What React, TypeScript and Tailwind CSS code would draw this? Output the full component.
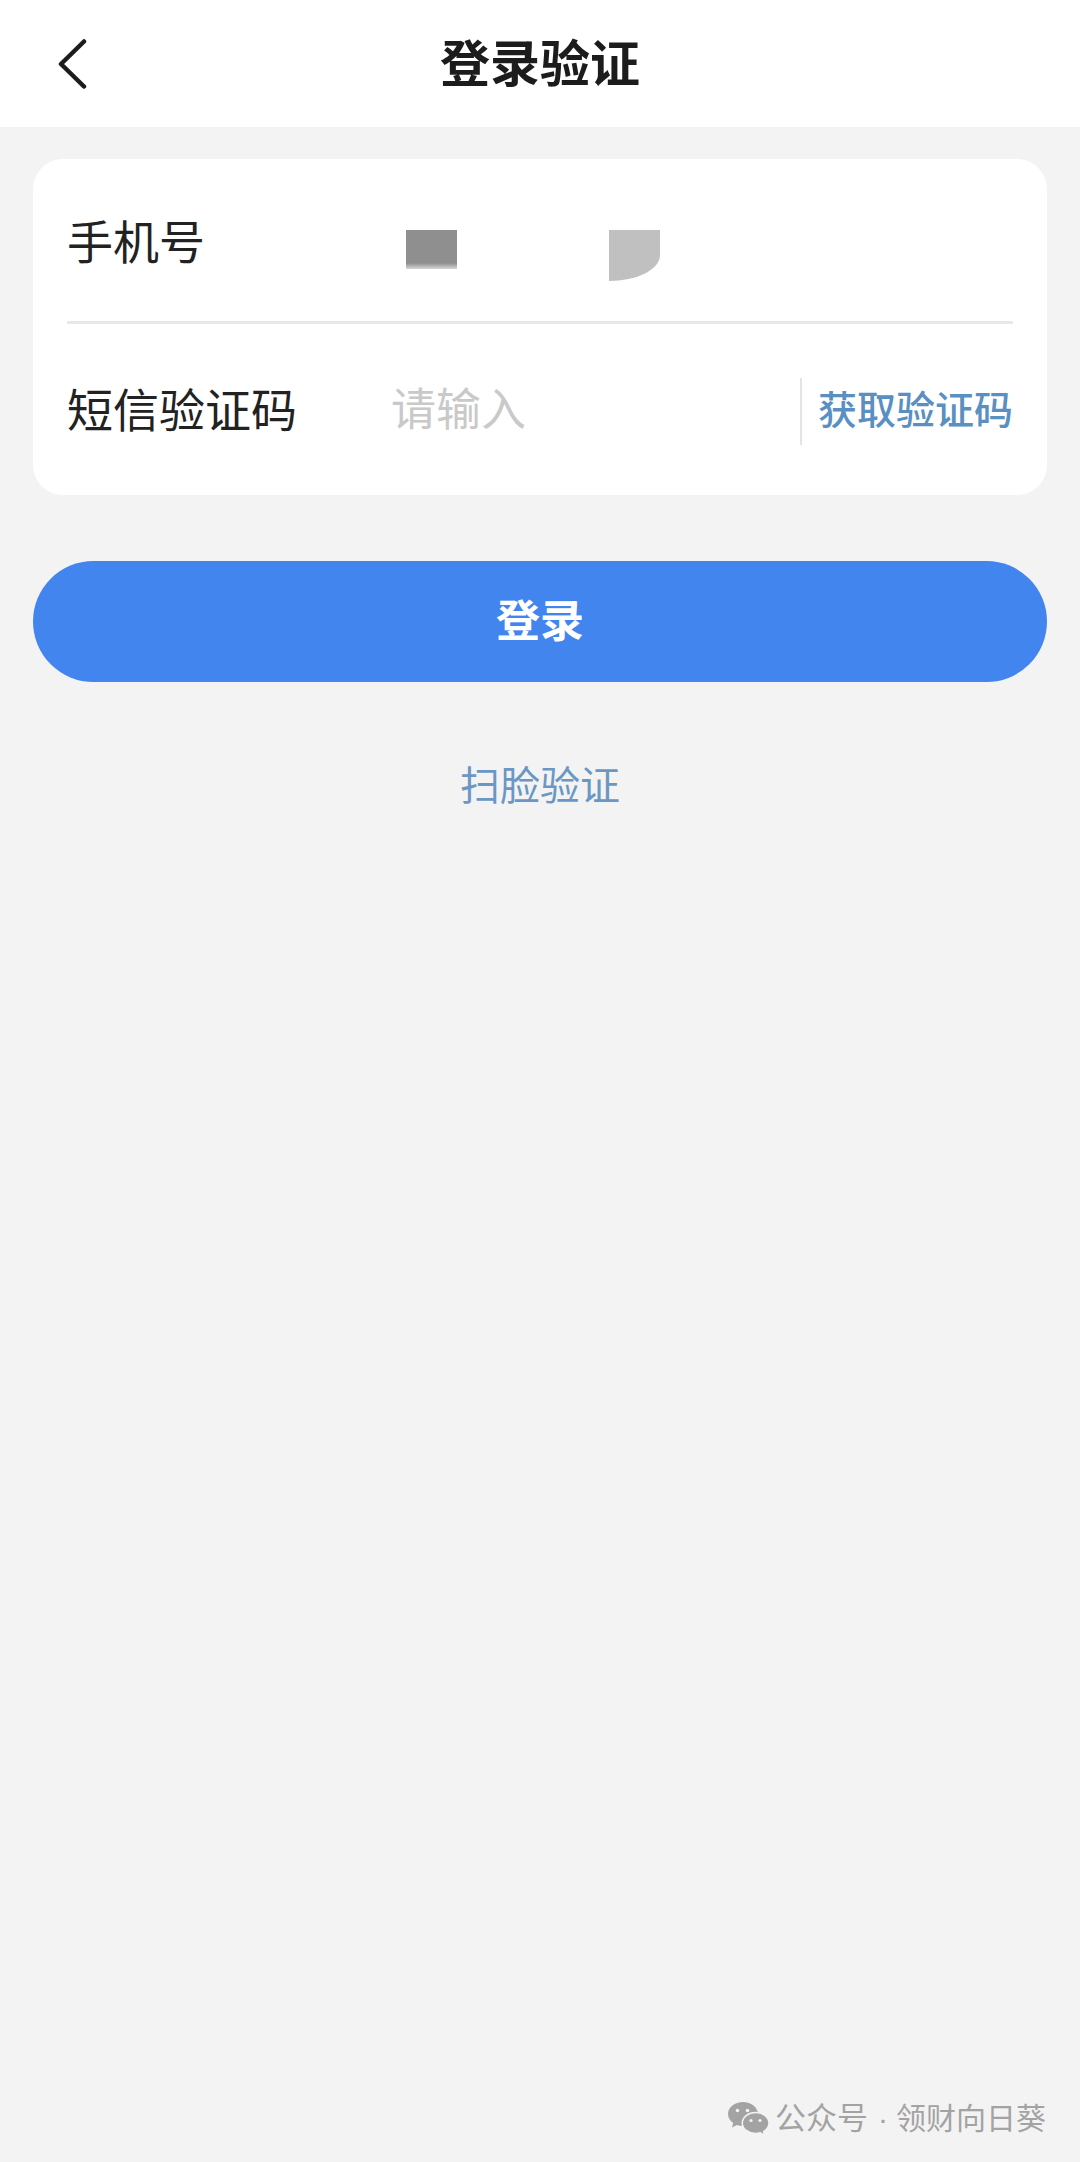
function BackIcon() {
    return (
        <svg width="32" height="50" viewBox="0 0 32 50" fill="none" className="text-[#1c1c1c]">
            <path d="M28 2.500 5 25l23 22.500" stroke="currentColor" strokeWidth="4.500" strokeLinecap="round" strokeLinejoin="round" />
        </svg>
    )
}

function WechatIcon() {
    return (
        <svg width="41" height="34" viewBox="0 0 41 34" className="shrink-0">
            <path d="M15 0C6.900 0 0 5.300 0 12c0 3.700 2.100 6.900 5.200 9.100L4 25.500l5-2.600c1.900.6 3.900.9 6 .9 8.100 0 15-5.300 15-11.800S23.100 0 15 0z" fill="#a3a3a3" />
            <path d="M27.500 10.500C20.300 10.500 14.300 15.100 14.300 21s6 10.500 13.200 10.500c1.700 0 3.300-.3 4.800-.7l4.300 2.700-1-3.900c3.300-2 5.400-5.100 5.400-8.600 0-5.900-6.100-10.500-13.500-10.500z" fill="#a3a3a3" stroke="#f3f3f3" strokeWidth="1.500" />
            <circle cx="9.500" cy="8.500" r="1.800" fill="#f3f3f3" />
            <circle cx="19.500" cy="8.500" r="1.800" fill="#f3f3f3" />
            <circle cx="23" cy="18.500" r="1.600" fill="#f3f3f3" />
            <circle cx="32" cy="18.500" r="1.600" fill="#f3f3f3" />
        </svg>
    )
}

export default function App() {
    return (
        <div className="flex h-[2162px] w-[1080px] flex-col bg-[#f3f3f3] font-['Liberation_Sans','Noto_Sans_CJK_SC',sans-serif]">
            <header className="grid h-[127px] grid-cols-[1fr_auto_1fr] items-center bg-white">
                <div className="pt-[1px] pl-[56px]">
                    <BackIcon />
                </div>
                <h1 className="pt-[3px] text-[50px] leading-[60px] font-bold text-[#1c1c1c]">登录验证</h1>
                <div />
            </header>

            <div className="mx-[33px] mt-[32px] rounded-[30px] bg-white px-[34px]">
                <div className="flex h-[165px] items-center border-b-[3px] border-[#e8e8e8] pt-[6px]">
                    <span className="w-[324px] text-[46px] leading-[60px] text-[#222222]">手机号</span>
                    <div className="mt-[25px] ml-[15px] flex items-start gap-[152px]">
                        <div className="h-[39px] w-[51px] bg-linear-to-b from-[#8f8f8f] from-85% to-[#d8d8d8]" />
                        <div className="h-[51px] w-[51px] rounded-br-[51px_26px] bg-[#c0c0c0]" />
                    </div>
                </div>
                <div className="flex h-[171px] items-center pt-[3px]">
                    <span className="w-[324px] text-[46px] leading-[60px] text-[#222222]">短信验证码</span>
                    <span className="flex-1 text-[45px] leading-[60px] text-[#c9c9c9]">请输入</span>
                    <div className="h-[67px] w-[2px] bg-[#e4e4e4]" />
                    <button className="ml-[16px] text-[39px] leading-[60px] font-medium text-[#5a8fc2]">获取验证码</button>
                </div>
            </div>

            <button className="mx-[33px] mt-[66px] h-[121px] rounded-full bg-[#4285ee] text-[44px] font-bold text-white">
                登录
            </button>

            <a className="mt-[79px] self-center text-[40px] leading-[50px] text-[#6a97c4]">扫脸验证</a>

            <div className="mt-auto mb-[23px] flex h-[40px] items-center justify-end pr-[34px] text-[30px] leading-[40px] text-[#a3a3a3]">
                <WechatIcon />
                <span className="ml-[6px] text-[31px]">公众号</span>
                <span className="mr-[8px] ml-[10px]">·</span>
                <span>领财向日葵</span>
            </div>
        </div>
    )
}
